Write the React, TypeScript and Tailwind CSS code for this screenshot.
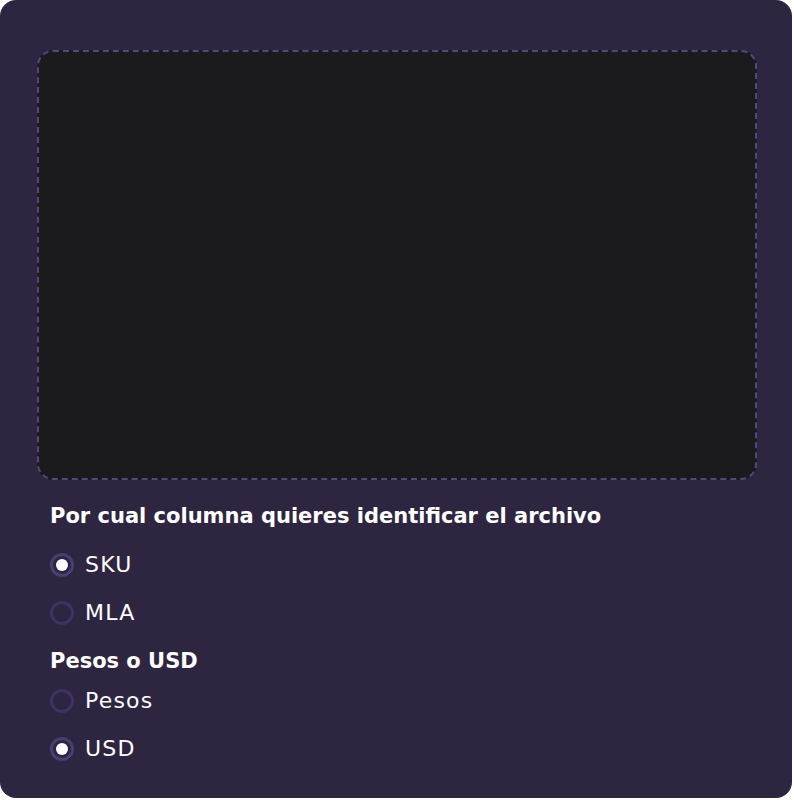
import { useState } from "react";

function Radio({
  label,
  checked,
  onSelect,
}: {
  label: string;
  checked: boolean;
  onSelect: () => void;
}) {
  return (
    <label
      className="flex items-center gap-[11px] h-[48px] cursor-pointer"
      onClick={onSelect}
    >
      <span
        className={`w-[24px] h-[24px] rounded-full border-[3px] flex items-center justify-center ${
          checked ? "border-[#4b3e71]" : "border-[#3e3362]"
        }`}
      >
        {checked && <span className="w-[12px] h-[12px] rounded-full bg-white" />}
      </span>
      <span className="text-[22px] text-white leading-none tracking-[1.2px]">{label}</span>
    </label>
  );
}

export default function App() {
  const [column, setColumn] = useState("SKU");
  const [currency, setCurrency] = useState("USD");

  return (
    <div className="w-[794px] h-[800px] bg-white" style={{ fontFamily: "'DejaVu Sans', sans-serif" }}>
      <div className="w-[792px] h-[798px] bg-[#2e2541] rounded-[16px] px-[37px] pt-[50px]">
        {/* Drop zone */}
        <div className="w-[720px] h-[430px] rounded-[16px] border-2 border-dashed border-[#54477c] bg-[#1b1a1d]" />

        <div className="pl-[13px]">
          <h2 className="mt-[21px] text-[21px] font-bold text-white leading-[30px]">
            Por cual columna quieres identificar el archivo
          </h2>
          <div className="mt-[10px]">
            <Radio label="SKU" checked={column === "SKU"} onSelect={() => setColumn("SKU")} />
            <Radio label="MLA" checked={column === "MLA"} onSelect={() => setColumn("MLA")} />
          </div>
          <h2 className="mt-[9px] text-[21px] font-bold text-white leading-[30px]">
            Pesos o USD
          </h2>
          <div className="mt-[1px]">
            <Radio label="Pesos" checked={currency === "Pesos"} onSelect={() => setCurrency("Pesos")} />
            <Radio label="USD" checked={currency === "USD"} onSelect={() => setCurrency("USD")} />
          </div>
        </div>
      </div>
    </div>
  );
}
